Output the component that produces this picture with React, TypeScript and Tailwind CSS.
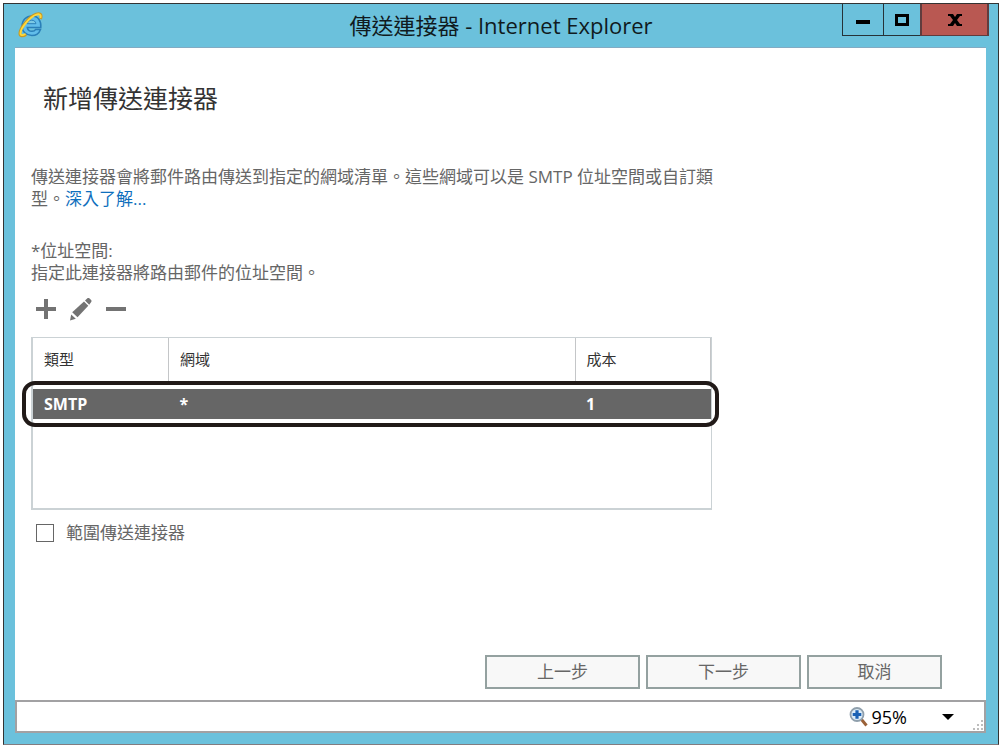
import React from "react";

const columns = ["類型", "網域", "成本"];
const rows = [{ type: "SMTP", domain: "*", cost: "1" }];

function BrowserLogo() {
  return (
    <svg width="26" height="26" viewBox="0 0 26 26" aria-hidden="true">
      <path
        d="M22.800 15.600H9.300c.4 2.300 2.200 3.700 4.700 3.700 1.800 0 3-.7 3.700-1.900h4.800c-1.400 3.900-4.600 6.100-8.700 6.100-5.700 0-9.700-3.900-9.700-9.600 0-5.800 4.100-9.800 9.800-9.800 6.100 0 9.500 4.400 8.900 11.500Z"
        fill="#62bdea"
        stroke="#2a7fb8"
        strokeWidth="1.500"
      />
      <path d="M9.300 11.700h8.600c-.3-2.200-1.900-3.500-4.200-3.500s-3.900 1.300-4.400 3.500Z" fill="#7cc9e4" stroke="#2a7fb8" />
      <path
        d="M8.200 22.500c-3.800 2.200-6.500 1.700-6.300-1.200C2 15.500 11.500 4.200 18.200 2c3.700-1.200 6.200.4 4.300 5"
        fill="none"
        stroke="#c89a22"
        strokeWidth="2.800"
      />
      <path
        d="M7.500 22c-3.300 1.700-5.200 1.400-5-.7C2.800 15.800 12 4.700 18.300 2.600c3-.9 5.200.2 4 3.400"
        fill="none"
        stroke="#ffd83c"
        strokeWidth="1.900"
      />
    </svg>
  );
}

function PencilIcon() {
  return (
    <svg width="22" height="24" viewBox="0 0 22 24" aria-hidden="true" fill="#737373">
      <path d="M0 23.500 1.200 17.500 5.800 21.700z" />
      <path d="M2.200 15.200 14 4.500l4.300 4.300L7.500 20.300z" />
      <path d="m15 3.500 2.400-2.200c.6-.5 1.300-.5 1.900 0l1.800 1.700c.6.6.6 1.300.1 1.900L19.200 7.700z" />
    </svg>
  );
}

function MagnifierIcon() {
  return (
    <svg width="20" height="20" viewBox="0 0 20 20" aria-hidden="true">
      <path d="m12.500 12.500 5 6" stroke="#9a6138" strokeWidth="3" />
      <circle cx="8" cy="7.500" r="6.500" fill="#dcecf8" stroke="#8f9fac" strokeWidth="1.800" />
      <path d="M8 3.200v8.600M3.700 7.500h8.600" stroke="#1b62b5" strokeWidth="3.200" />
    </svg>
  );
}

function ResizeGrip() {
  return (
    <svg width="12" height="12" viewBox="0 0 12 12" fill="#bdbdbd" aria-hidden="true">
      <path d="M9 1h2v2H9zM9 5h2v2H9zM9 9h2v2H9zM5 5h2v2H5zM5 9h2v2H5zM1 9h2v2H1z" />
    </svg>
  );
}

function TitleBar() {
  return (
    <header className="grid h-[43px] grid-cols-[1fr_auto_1fr] items-start">
      <div className="pt-2 pl-[14px]">
        <BrowserLogo />
      </div>
      <h1 className="pt-1 text-[22px] leading-[34px] whitespace-nowrap text-[#101a20]">傳送連接器 - Internet Explorer</h1>
      <div className="flex h-8 justify-end pr-[9px]">
        <button type="button" aria-label="最小化" className="flex w-[41px] items-center justify-center border-b border-l border-[#263238]">
          <svg width="14" height="12" viewBox="0 0 14 12" aria-hidden="true">
            <path d="M0 6h14v4H0z" />
          </svg>
        </button>
        <button type="button" aria-label="最大化" className="flex w-[37px] items-center justify-center border-b border-l border-[#263238]">
          <svg width="14" height="12" viewBox="0 0 14 12" fill="none" aria-hidden="true">
            <path d="M1.500 1.500h11v9h-11z" stroke="#000" strokeWidth="3" />
          </svg>
        </button>
        <button type="button" aria-label="關閉" className="flex w-[69px] items-center justify-center border-x-2 border-b border-[#613c3d] bg-[#b95852]">
          <svg width="14" height="12" viewBox="0 0 14 12" aria-hidden="true">
            <path d="M0 0h5l2 3 2-3h5v2h-2L9 6l3 4h2v2H9L7 9l-2 3H0v-2h2l3-4-3-4H0z" />
          </svg>
        </button>
      </div>
    </header>
  );
}

function AddressTable() {
  return (
    <div className="relative mt-4 min-h-[173px] w-[681px] max-w-full border-2 border-t border-r border-[#cbd2d5]">
      <table className="w-full table-fixed border-collapse text-left text-[15px]">
        <colgroup>
          <col className="w-[20%]" />
          <col className="w-[60%]" />
          <col className="w-[20%]" />
        </colgroup>
        <thead className="text-[#333]">
          <tr className="h-[43px] border-b border-[#cbd2d5]">
            {columns.map((name) => (
              <th key={name} scope="col" className="border-r border-[#c4c6c8] px-[11px] font-normal">
                {name}
              </th>
            ))}
          </tr>
        </thead>
        <tbody className="text-base font-bold text-white">
          <tr className="h-2">
            <td colSpan={3}></td>
          </tr>
          {rows.map((row) => (
            <tr key={row.type} className="h-[30px] bg-[#666]">
              <td className="px-[11px] leading-5">{row.type}</td>
              <td className="px-[11px] leading-5">{row.domain}</td>
              <td className="px-[11px] leading-5">{row.cost}</td>
            </tr>
          ))}
        </tbody>
      </table>
      <div className="pointer-events-none absolute -right-2 -left-[11px] top-[43px] h-[46px] rounded-[13px] border-4 border-[#211a18]" />
    </div>
  );
}

export default function App() {
  const action = "h-[34px] border-2 border-[#94a1a0] bg-[#f8f8f8] text-[17px] text-[#666]";
  return (
    <div
      lang="zh-TW"
      className="flex min-h-screen flex-col bg-white p-[3px] font-['Open_Sans','Noto_Sans_CJK_TC',sans-serif]"
    >
      <div className="flex grow flex-col border border-[#333] border-b-[#827c80] bg-[#6bc1dc] pb-[11px]">
        <TitleBar />
        <div className="mr-3 ml-[11px] flex grow flex-col">
          <main className="flex grow flex-col border-t border-[#82abc3] bg-white pr-11 pb-[11px] pl-4 text-[17px] leading-[22px] text-[#666]">
            <h2 className="mt-8 pl-3 text-[25px] leading-9 text-[#333]">新增傳送連接器</h2>
            <p className="mt-[50px]">
              傳送連接器會將郵件路由傳送到指定的網域清單。這些網域可以是 SMTP 位址空間或自訂類
              <br />
              型。
              <a href="#learn-more" className="text-[#0f6fbd]">
                深入了解...
              </a>
            </p>
            <div className="mt-[30px]">
              <p>*位址空間:</p>
              <p>指定此連接器將路由郵件的位址空間。</p>
            </div>
            <div className="mt-[13px] flex h-6 items-center gap-[13px] pl-1">
              <button type="button" aria-label="新增">
                <svg width="22" height="22" viewBox="0 0 22 22" aria-hidden="true">
                  <path d="M11 1v20M1 11h20" stroke="#737373" strokeWidth="4" />
                </svg>
              </button>
              <button type="button" aria-label="編輯">
                <PencilIcon />
              </button>
              <button type="button" aria-label="移除">
                <svg width="22" height="22" viewBox="0 0 22 22" aria-hidden="true">
                  <path d="M1 11h20" stroke="#737373" strokeWidth="4" />
                </svg>
              </button>
            </div>
            <AddressTable />
            <div className="mt-3 flex items-center gap-3 pl-[5px]">
              <input id="scoped" type="checkbox" className="size-[18px] appearance-none border border-[#666] bg-white checked:bg-[#666]" />
              <label htmlFor="scoped">範圍傳送連接器</label>
            </div>
            <div className="mt-auto flex justify-end gap-[6px]">
              <button type="button" className={action + " w-[155px]"}>上一步</button>
              <button type="button" className={action + " w-[155px]"}>下一步</button>
              <button type="button" className={action + " w-[135px]"}>取消</button>
            </div>
          </main>
          <footer className="flex h-[33px] items-center justify-end border-2 border-[#a2a1a3] bg-white">
            <button type="button" aria-label="縮放 95%" className="flex items-center gap-[3px] text-lg leading-6 text-black">
              <MagnifierIcon />
              95%
              <svg className="ml-8" width="12" height="6" viewBox="0 0 12 6" aria-hidden="true">
                <path d="M0 0h12L6 6z" />
              </svg>
            </button>
            <div className="ml-[18px] self-end">
              <ResizeGrip />
            </div>
          </footer>
        </div>
      </div>
    </div>
  );
}
